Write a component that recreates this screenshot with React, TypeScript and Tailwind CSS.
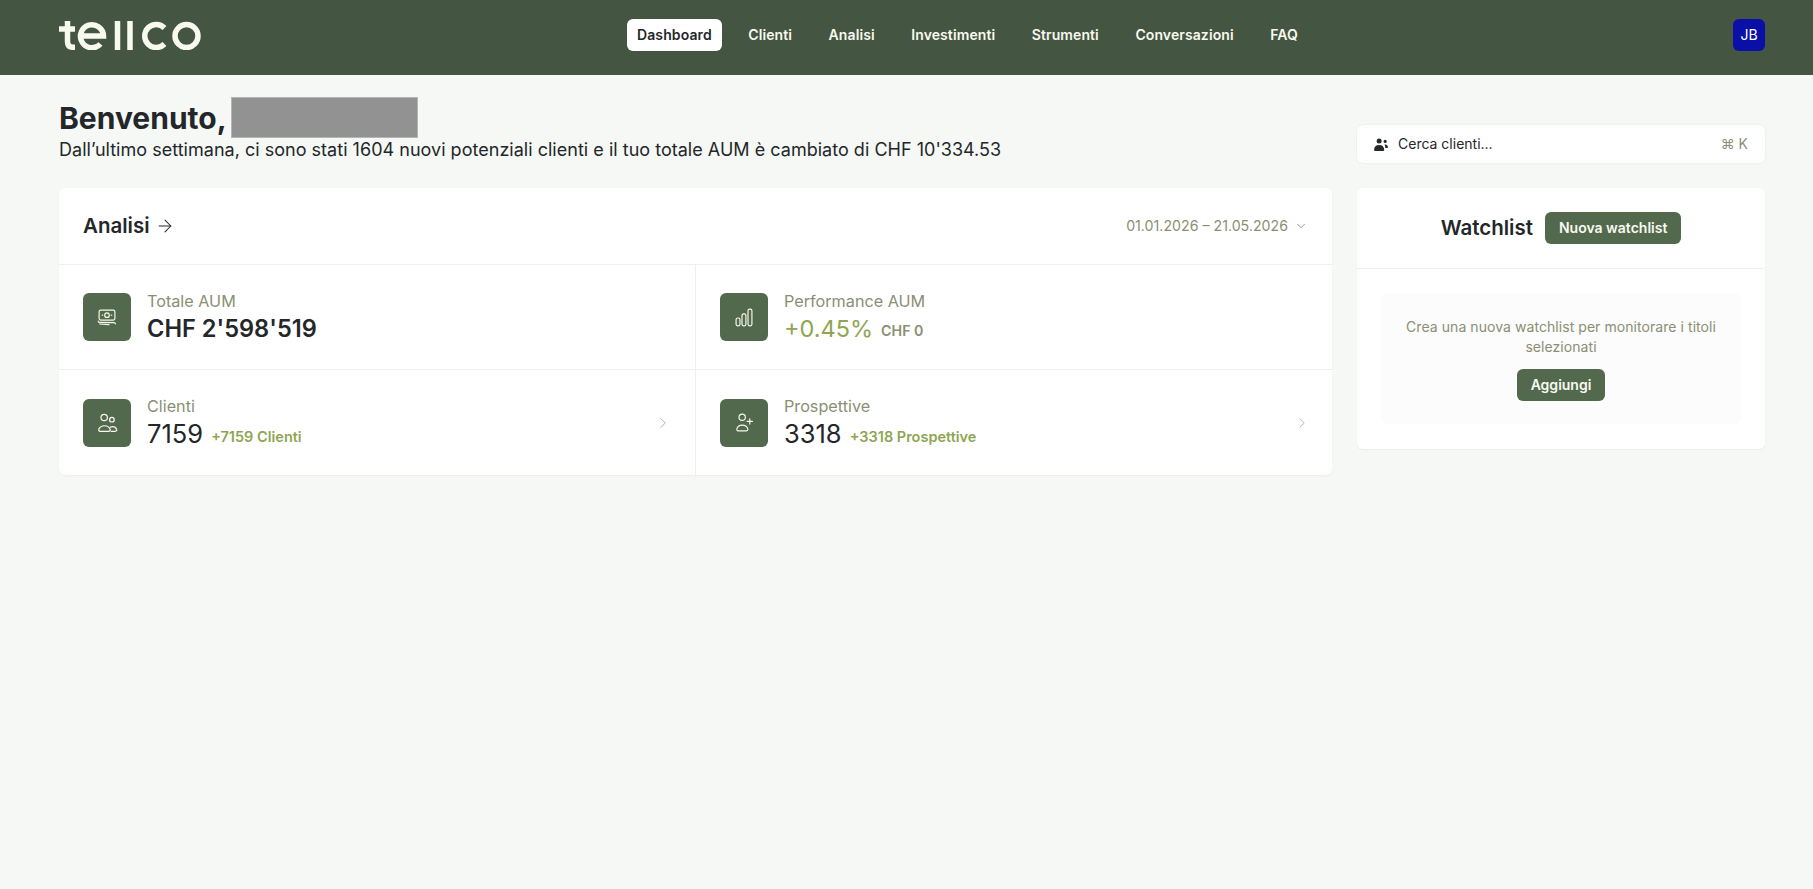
import { ArrowRight, ChevronDown, ChevronRight } from 'lucide-react';
import type { ReactNode } from 'react';

const NAV_ITEMS = ['Dashboard', 'Clienti', 'Analisi', 'Investimenti', 'Strumenti', 'Conversazioni', 'FAQ'];

function Logo() {
  return (
    <svg width="143" height="29" viewBox="0 0 143 29" fill="none" stroke="#f8f9ef" strokeWidth="5.500" aria-label="tellco">
      <path d="M8.500 0V20.500Q8.500 26.300 14 26.300H16" />
      <path d="M0 8H16" />
      <path d="M21.500 15H44.500A11.500 11.500 0 1 0 41.500 23" />
      <path d="M58.500 0V29" />
      <path d="M71 0V29" />
      <path d="M105.500 7A11.500 11.500 0 1 0 105.500 23" />
      <circle cx="127.500" cy="15" r="11.500" />
    </svg>
  );
}

function MoneyIcon() {
  return (
    <svg width="20" height="17" viewBox="0 0 19 16" fill="none" stroke="#f8f9ef" strokeWidth="1.100" strokeLinecap="round" strokeLinejoin="round">
      <rect x="2" y="1" width="15" height="9.500" rx="1.500" />
      <circle cx="9.500" cy="5.750" r="2.200" />
      <path d="M5 5.750h.4M13.600 5.750h.4" />
      <path d="M1.200 11.500c0 .800.500 1.100 1.100 1.100l13.700 .300c1 0 1.500 .300 1.500 1.100" />
      <path d="M2.500 14.200l9 .500" />
    </svg>
  );
}

function UsersIcon() {
  return (
    <svg width="21" height="20" viewBox="0 0 19 18" fill="none" stroke="#f8f9ef" strokeWidth="1.100" strokeLinecap="round">
      <circle cx="6.500" cy="4" r="2.900" />
      <circle cx="13.500" cy="6" r="2.100" />
      <path d="M2.800 16.500h7.400c1.500 0 2.100-1 1.600-2-.900-1.800-2.900-3-4.900-3s-4.400 1.200-5.200 3c-.400 1 .100 2 1.100 2z" />
      <path d="M12.800 16.500h3.700c1 0 1.700-.800 1.300-1.700-.600-1.500-2.100-2.500-3.700-2.500-.700 0-1.300 .100-2 .400" />
    </svg>
  );
}

function ChartIcon() {
  return (
    <svg width="18" height="19" viewBox="0 0 17 18" fill="none" stroke="#f8f9ef" strokeWidth="1.100">
      <rect x="1" y="9.500" width="3.700" height="7.500" rx="1.500" />
      <rect x="6.600" y="5.500" width="3.700" height="11.500" rx="1.500" />
      <rect x="12.300" y="1" width="3.700" height="16" rx="1.500" />
    </svg>
  );
}

function UserPlusIcon() {
  return (
    <svg width="19" height="19" viewBox="0 0 18 18" fill="none" stroke="#f8f9ef" strokeWidth="1.100" strokeLinecap="round">
      <circle cx="6.800" cy="4" r="3" />
      <path d="M2.800 17h7.500c1.500 0 2.200-1 1.800-2.200-.800-2-3.100-3.300-5.300-3.300s-4.300 1.300-5 3.300c-.400 1.200 .300 2.200 1 2.200z" />
      <path d="M14 5.500v5M11.500 8h5" />
    </svg>
  );
}

function SearchUsersIcon() {
  return (
    <svg width="14" height="13" viewBox="0 0 15 14" fill="#262a2b">
      <circle cx="5.500" cy="3.200" r="2.700" />
      <path d="M0 13c0-3.500 2-5.500 5.500-5.500S11 9.500 11 13c0 .500-.500 1-1 1H1c-.500 0-1-.500-1-1z" />
      <circle cx="12" cy="3.700" r="1.700" />
      <path d="M11.300 7c2.200-.300 3.700 1 3.700 3 0 .500-.300 .800-.800 .800h-2c-.200-1.500-.400-2.700-.900-3.800z" />
    </svg>
  );
}

function StatCell({ icon, label, children, link, divider }: { icon: ReactNode; label: string; children: ReactNode; link?: boolean; divider?: boolean }) {
  return (
    <div className={`flex items-center pl-6 ${divider ? 'border-l border-[#edf0ec] pr-[21px]' : 'pr-[23px]'}`}>
      <div className="flex size-12 shrink-0 items-center justify-center rounded-md bg-[#53694e]">{icon}</div>
      <div className="ml-4 flex-1">
        <div className="text-[16.2px] leading-[22px] text-[#8a8f74]">{label}</div>
        <div className="mt-[1px] flex h-[32px] items-center">{children}</div>
      </div>
      {link && <ChevronRight className="size-[18px] text-[#9a9d90]" strokeWidth={1} />}
    </div>
  );
}

export default function App() {
  return (
    <div className="min-h-[889px] bg-[#f5f8f5] font-['Inter',sans-serif] text-[#24272a]">
      {/* Top navigation */}
      <header className="flex h-[75px] items-center bg-[#445541] pb-[5px] pl-[59px] pr-[48px]">
        <div className="w-[568px] shrink-0">
          <Logo />
        </div>
        <nav className="flex items-center gap-[16.5px] text-sm font-semibold tracking-[0.1px] text-[#f8f9ef]">
          {NAV_ITEMS.map((item) => (
            <a key={item} className={`flex h-8 items-center rounded-md px-[10px] ${item === 'Dashboard' ? 'bg-white text-[#24272a]' : ''}`}>
              {item}
            </a>
          ))}
        </nav>
        <div className="ml-auto flex size-8 items-center justify-center rounded-md bg-[#0a0fa8] text-sm text-white">JB</div>
      </header>

      <main className="flex gap-[25px] pl-[59px] pr-[48px] pt-[22px]">
        <div className="flex-1">
          <h1 className="flex h-[41px] items-center text-[30px] font-bold">
            <span className="mt-[2px]">Benvenuto,</span>
            <span className="ml-[4px] inline-block h-[41px] w-[187px] border border-[#b5b5b5] bg-[#929292]" />
          </h1>
          <p className="text-lg leading-[24px] tracking-[0.02px]">Dall’ultimo settimana, ci sono stati 1604 nuovi potenziali clienti e il tuo totale AUM è cambiato di CHF 10'334.53</p>

          <section className="mt-[26px] rounded-md bg-white shadow-[0_1px_2px_rgba(60,80,60,0.06)]">
            <div className="flex h-[77px] items-center justify-between border-b border-[#edf0ec] px-6">
              <div className="flex items-center gap-[5px] text-[20.5px] font-semibold">
                Analisi
                <ArrowRight className="size-5" strokeWidth={1.25} />
              </div>
              <div className="flex items-center gap-[6px] text-[14.2px] text-[#8a8f74]">
                01.01.2026 – 21.05.2026
                <ChevronDown className="size-[14px] text-[#6f7362]" strokeWidth={1.25} />
              </div>
            </div>
            <div className="grid h-[105px] grid-cols-[636px_1fr] border-b border-[#edf0ec]">
              <StatCell icon={<MoneyIcon />} label="Totale AUM">
                <span className="text-[23.6px] font-semibold">CHF 2'598'519</span>
              </StatCell>
              <StatCell icon={<ChartIcon />} label="Performance AUM" divider>
                <span className="text-[23.5px] text-[#8ea552]">+0.45%</span>
                <span className="ml-2 mt-[5px] text-[14.2px] font-semibold text-[#8a8f74]">CHF 0</span>
              </StatCell>
            </div>
            <div className="grid h-[105px] grid-cols-[636px_1fr]">
              <StatCell icon={<UsersIcon />} label="Clienti" link>
                <span className="text-[25.5px]">7159</span>
                <span className="ml-2 mt-[5px] text-[14.5px] font-semibold text-[#8ea552]">+7159 Clienti</span>
              </StatCell>
              <StatCell icon={<UserPlusIcon />} label="Prospettive" link divider>
                <span className="text-[25.5px]">3318</span>
                <span className="ml-2 mt-[5px] text-[14.5px] font-semibold text-[#8ea552]">+3318 Prospettive</span>
              </StatCell>
            </div>
          </section>
        </div>

        <aside className="w-[408px] shrink-0 pt-[28px]">
          <div className="flex h-[38px] items-center rounded-md bg-white px-[17px] text-sm shadow-[0_0_2px_rgba(60,80,60,0.12)]">
            <SearchUsersIcon />
            <span className="ml-[10px] flex-1">Cerca clienti...</span>
            <span className="text-[#8a8f74]">⌘ K</span>
          </div>

          <section className="mt-[25px] rounded-md bg-white shadow-[0_1px_2px_rgba(60,80,60,0.06)]">
            <div className="flex h-[81px] items-center justify-center gap-3 border-b border-[#edf0ec]">
              <span className="text-[20.5px] font-semibold">Watchlist</span>
              <button className="h-8 rounded-md bg-[#53694e] px-[14px] text-sm font-semibold text-[#f8f9ef]">Nuova watchlist</button>
            </div>
            <div className="px-6 pb-[25px] pt-6">
              <div className="flex flex-col items-center rounded-md bg-[#fbfcfb] px-4 pb-[23px] pt-6 text-center">
                <p className="text-sm leading-5 tracking-[0.06px] text-[#8a8f74]">Crea una nuova watchlist per monitorare i titoli selezionati</p>
                <button className="mt-3 h-8 rounded-md bg-[#53694e] px-[14px] text-sm font-semibold text-[#f8f9ef]">Aggiungi</button>
              </div>
            </div>
          </section>
        </aside>
      </main>
    </div>
  );
}
